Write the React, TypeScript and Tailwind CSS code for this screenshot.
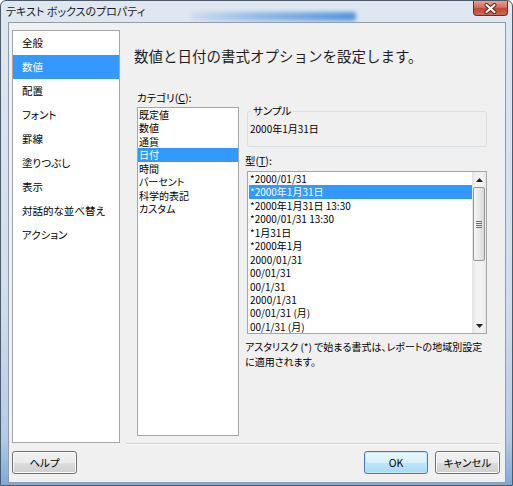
import React from "react";

const navItems = [
  "全般",
  "数値",
  "配置",
  "フォント",
  "罫線",
  "塗りつぶし",
  "表示",
  "対話的な並べ替え",
  "アクション",
];

const categories = [
  "既定値",
  "数値",
  "通貨",
  "日付",
  "時間",
  "パーセント",
  "科学的表記",
  "カスタム",
];

const formats = [
  "*2000/01/31",
  "*2000年1月31日",
  "*2000年1月31日 13:30",
  "*2000/01/31 13:30",
  "*1月31日",
  "*2000年1月",
  "2000/01/31",
  "00/01/31",
  "00/1/31",
  "2000/1/31",
  "00/01/31 (月)",
  "00/1/31 (月)",
];

function WinButton({ label, primary }: { label: string; primary?: boolean }) {
  return (
    <button
      className={`h-[23px] rounded-[3px] border text-[10.5px] text-black ${
        primary
          ? "w-[64px] border-[#3c7fb1] shadow-[inset_0_0_0_1px_#c4e5f6] bg-[linear-gradient(#eaf6fd_0%,#d9f0fc_50%,#bee6fd_50%,#a7d9f5_100%)]"
          : "w-[65px] border-[#707070] shadow-[inset_0_0_0_1px_#fbfbfb] bg-[linear-gradient(#f2f2f2_0%,#ebebeb_50%,#dddddd_50%,#cfcfcf_100%)]"
      }`}
    >
      {label}
    </button>
  );
}

function ScrollBar() {
  return (
    <div className="w-[14px] h-full flex flex-col bg-[linear-gradient(90deg,#e3e3e3,#f2f2f2_30%,#f2f2f2_70%,#e8e8e8)]">
      <div className="h-[15px] flex items-center justify-center">
        <svg width="7" height="4" viewBox="0 0 7 4">
          <path d="M3.5 0 L7 4 L0 4 Z" fill="#222" />
        </svg>
      </div>
      <div className="mx-[1px] h-[74px] rounded-[2px] border border-[#979797] bg-[linear-gradient(90deg,#f4f4f4,#e9e9e9_50%,#d9d9d9)] flex items-center justify-center">
        <div className="flex flex-col gap-[1px]">
          <div className="w-[6px] h-[1px] bg-[#6e6e6e]" />
          <div className="w-[6px] h-[1px] bg-[#6e6e6e]" />
          <div className="w-[6px] h-[1px] bg-[#6e6e6e]" />
          <div className="w-[6px] h-[1px] bg-[#6e6e6e]" />
        </div>
      </div>
      <div className="flex-1" />
      <div className="h-[15px] flex items-center justify-center">
        <svg width="7" height="4" viewBox="0 0 7 4">
          <path d="M0 0 L7 0 L3.5 4 Z" fill="#222" />
        </svg>
      </div>
    </div>
  );
}

export default function App() {
  return (
    <div className="relative w-[513px] h-[486px] flex flex-col overflow-hidden rounded-t-[6px] border border-[#4b5b6e] bg-[linear-gradient(#dfe7f0_0%,#d3deea_60%,#b6cbe3_90%,#7fa9d8_100%)] font-['Noto_Sans_CJK_JP',sans-serif] text-[10.5px] text-black [font-feature-settings:'palt']">
      {/* glass reflection behind title */}
      <div className="absolute left-[190px] top-[11px] w-[165px] h-[9px] rounded-[3px] bg-[linear-gradient(90deg,#c9dbef,#7fb0e4_40%,#2f80d6)] blur-[2px] opacity-80" />

      <div className="relative h-[21px] shrink-0 flex items-center pl-[5px] text-[11px] text-[#1b1b1b]">
        テキスト ボックスのプロパティ
      </div>

      <div className="absolute right-[4px] top-0 w-[35px] h-[15px] rounded-b-[4px] border border-t-0 border-[#6b2a22] bg-[linear-gradient(#e8a193_0%,#d0705d_45%,#c2462f_55%,#d06a52_100%)] flex items-center justify-center">
        <svg width="13" height="11" viewBox="0 0 13 11">
          <path d="M2.5 2 L10.5 9 M10.5 2 L2.5 9" stroke="#5b2119" strokeWidth="4" strokeLinecap="round" />
          <path d="M2.5 2 L10.5 9 M10.5 2 L2.5 9" stroke="#ffffff" strokeWidth="2.2" strokeLinecap="round" />
        </svg>
      </div>

      <div className="relative ml-[7px] mr-[6px] h-[461px] border border-[#8c9db3] bg-[#f0f0f0] flex flex-col">
        <div className="flex pl-[3px] pt-[7px]">
          {/* navigation */}
          <div className="w-[108px] h-[413px] border border-[#a3a7ad] bg-white">
            {navItems.map((item, i) => (
              <div
                key={item}
                className={`h-[24px] leading-[24px] pl-[9px] ${
                  i === 1 ? "bg-[#3399ff] text-white" : ""
                }`}
              >
                {item}
              </div>
            ))}
          </div>

          {/* right panel */}
          <div className="ml-[6px] w-[374px] h-[415px] flex flex-col">
            <div className="flex-1">
              <div className="pl-[8px] pt-[16px] leading-[20px] text-[14.5px] text-[#1e1e1e] [font-feature-settings:normal]">
                数値と日付の書式オプションを設定します。
              </div>

              <div className="mt-[25px] pl-[11px] flex">
                <div>
                  <div className="leading-[14px]">
                    カテゴリ(<span className="underline">C</span>):
                  </div>
                  <div className="mt-[2px] w-[102px] h-[329px] border border-[#a3a7ad] bg-white text-[10px]">
                    {categories.map((c, i) => (
                      <div
                        key={c}
                        className={`h-[13.45px] leading-[13.45px] pl-[1px] ${
                          i === 3 ? "bg-[#3399ff] text-white" : ""
                        }`}
                      >
                        {c}
                      </div>
                    ))}
                  </div>
                </div>

                <div className="ml-[6px] pt-[13px]">
                  <fieldset className="ml-[2px] w-[240px] rounded-[3px] border border-[#d5dfe5] px-[2px] pt-[4px] pb-[10px]">
                    <legend className="ml-[1px] px-[2px] leading-[14px]">サンプル</legend>
                    <div className="leading-[14px] text-[10px]">2000年1月31日</div>
                  </fieldset>

                  <div className="mt-[7px] leading-[14px]">
                    型(<span className="underline">T</span>):
                  </div>
                  <div className="mt-[3px] ml-[2px] w-[240px] h-[163px] border border-[#a3a7ad] bg-white flex text-[10px]">
                    <div className="flex-1 pl-[1px]">
                      {formats.map((f, i) => (
                        <div
                          key={f}
                          className={`h-[13.45px] leading-[13.45px] pl-[1px] whitespace-nowrap ${
                            i === 1 ? "bg-[#3399ff] text-white" : ""
                          }`}
                        >
                          {f}
                        </div>
                      ))}
                    </div>
                    <ScrollBar />
                  </div>

                  <div className="mt-[5px] leading-[15px] whitespace-nowrap text-[10px]">
                    <div>アスタリスク (*) で始まる書式は、レポートの地域別設定</div>
                    <div>に適用されます。</div>
                  </div>
                </div>
              </div>
            </div>
            <div className="h-[2px] border-t border-[#d3d3d3] border-b border-b-white" />
          </div>
        </div>

        <div className="mt-[6px] flex items-center pl-[3px] pr-[5px]">
          <WinButton label="ヘルプ" />
          <div className="flex-1" />
          <WinButton label="OK" primary />
          <div className="w-[7px]" />
          <WinButton label="キャンセル" />
        </div>
      </div>
    </div>
  );
}
